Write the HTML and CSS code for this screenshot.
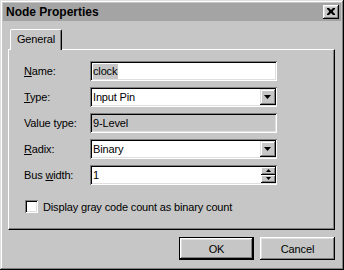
FILE: index.html
```html
<!DOCTYPE html>
<html>
<head>
<meta charset="utf-8">
<link rel="stylesheet" href="styles.css">
</head>
<body>
<div class="window">
  <div class="titlebar">
    <span class="title">Node Properties</span>
    <span class="close"><svg width="8" height="7" viewBox="0 0 8 7"><path d="M0 0h2l2 2 2-2h2v1L6 3v1l2 2v1H6L4 5 2 7H0V6l2-2V3L0 1z" fill="#000"/></svg></span>
  </div>
  <div class="content">
    <div class="tabs"><div class="tab">General</div></div>
    <div class="panel">
      <div class="row">
        <span class="label"><u>N</u>ame:</span>
        <div class="field"><span class="sel">clock</span></div>
      </div>
      <div class="row">
        <span class="label"><u>T</u>ype:</span>
        <div class="field">
          <span class="val">Input Pin</span>
          <span class="dropbtn"><svg width="7" height="4" viewBox="0 0 7 4"><path d="M0 0h7L3.5 4z" fill="#000"/></svg></span>
        </div>
      </div>
      <div class="row">
        <span class="label">Value type:</span>
        <div class="field disabled"><span class="val">9-Level</span></div>
      </div>
      <div class="row">
        <span class="label"><u>R</u>adix:</span>
        <div class="field">
          <span class="val">Binary</span>
          <span class="dropbtn"><svg width="7" height="4" viewBox="0 0 7 4"><path d="M0 0h7L3.5 4z" fill="#000"/></svg></span>
        </div>
      </div>
      <div class="row">
        <span class="label">Bus <u>w</u>idth:</span>
        <div class="field">
          <span class="val">1</span>
          <span class="spin">
            <span class="spinbtn"><svg width="5" height="3" viewBox="0 0 5 3"><path d="M2.5 0L5 3H0z" fill="#000"/></svg></span>
            <span class="spinbtn"><svg width="5" height="3" viewBox="0 0 5 3"><path d="M0 0h5L2.5 3z" fill="#000"/></svg></span>
          </span>
        </div>
      </div>
      <div class="check">
        <span class="box"></span>
        <span class="checklabel">Display gray code count as binary count</span>
      </div>
    </div>
    <div class="buttons">
      <div class="btn default"><span>OK</span></div>
      <div class="btn"><span>Cancel</span></div>
    </div>
  </div>
</div>
</body>
</html>
```
FILE: styles.css
```css
* { box-sizing: border-box; }
html, body { margin: 0; padding: 0; }
body {
  width: 344px;
  height: 270px;
  font-family: "Liberation Sans", Arial, sans-serif;
  font-size: 11px;
  letter-spacing: -0.15px;
  color: #000;
  background: #c6c6c6;
}
.window {
  width: 344px;
  height: 270px;
  padding: 3px;
  background: #c6c6c6;
  box-shadow: inset -1px -1px #000, inset 1px 1px #dfdfdf, inset -2px -2px #808080, inset 2px 2px #fff;
}
.titlebar {
  height: 18px;
  background: #a4a4a4;
  display: flex;
  align-items: center;
  justify-content: space-between;
  padding: 0 2px 0 3px;
}
.title {
  font-weight: bold;
  font-size: 12px;
  line-height: 18px;
  letter-spacing: 0;
}
.close {
  width: 16px;
  height: 14px;
  background: #c6c6c6;
  box-shadow: inset -1px -1px #000, inset 1px 1px #fff, inset -2px -2px #808080, inset 2px 2px #dfdfdf;
  display: flex;
  align-items: center;
  justify-content: center;
  padding: 0 1px 1px 0;
}
.content {
  padding: 8px 5px 0 5px;
}
.tabs {
  display: flex;
  height: 20px;
  padding-left: 2px;
  position: relative;
  z-index: 1;
}
.tab {
  width: 52px;
  height: 21px;
  background: #c6c6c6;
  border-top: 1px solid #fff;
  border-left: 1px solid #fff;
  border-right: 1px solid #000;
  border-top-left-radius: 2px;
  border-top-right-radius: 2px;
  box-shadow: inset -1px 0 #808080;
  text-align: center;
  line-height: 17px;
  padding-top: 1px;
}
.panel {
  width: 327px;
  height: 181px;
  border-top: 1px solid #fff;
  border-left: 1px solid #fff;
  border-right: 1px solid #000;
  border-bottom: 1px solid #000;
  box-shadow: inset -1px -1px #808080;
  padding: 11px 0 0 15px;
}
.row {
  display: flex;
  align-items: center;
  height: 20px;
  margin-bottom: 6px;
}
.label {
  width: 66px;
  flex: none;
}
.field {
  width: 187px;
  height: 20px;
  background: #fff;
  box-shadow: inset 1px 1px #808080, inset -1px -1px #fff, inset 2px 2px #000, inset -2px -2px #dfdfdf;
  display: flex;
  align-items: center;
  padding: 2px 2px 2px 3px;
}
.field.disabled {
  background: #c6c6c6;
}
.sel {
  background: #c6c6c6;
  padding: 0 1px 1px 0;
  line-height: 14px;
}
.val {
  flex: 1;
  line-height: 14px;
}
.dropbtn {
  width: 16px;
  height: 16px;
  margin-left: auto;
  margin-right: -1px;
  background: #c6c6c6;
  box-shadow: inset -1px -1px #000, inset 1px 1px #dfdfdf, inset -2px -2px #808080, inset 2px 2px #fff;
  display: flex;
  align-items: center;
  justify-content: center;
  padding: 0 1px 1px 0;
}
.spin {
  display: flex;
  flex-direction: column;
  width: 15px;
  height: 16px;
  margin-right: -1px;
}
.spinbtn {
  height: 8px;
  background: #c6c6c6;
  box-shadow: inset -1px -1px #000, inset 1px 1px #fff, inset -2px -2px #808080;
  display: flex;
  align-items: center;
  justify-content: center;
  padding-bottom: 1px;
}
.check {
  display: flex;
  align-items: center;
  margin-top: 15px;
  padding-left: 1px;
}
.box {
  width: 13px;
  height: 13px;
  background: #fff;
  box-shadow: inset 1px 1px #808080, inset -1px -1px #fff, inset 2px 2px #000, inset -2px -2px #dfdfdf;
  margin-right: 5px;
  flex: none;
}
.buttons {
  display: flex;
  justify-content: flex-end;
  gap: 6px;
  width: 327px;
  margin-top: 7px;
}
.btn {
  width: 75px;
  height: 23px;
  background: #c6c6c6;
  box-shadow: inset -1px -1px #000, inset 1px 1px #fff, inset -2px -2px #808080, inset 2px 2px #dfdfdf;
  display: flex;
  align-items: center;
  justify-content: center;
}
.btn.default {
  border: 1px solid #000;
}
```
